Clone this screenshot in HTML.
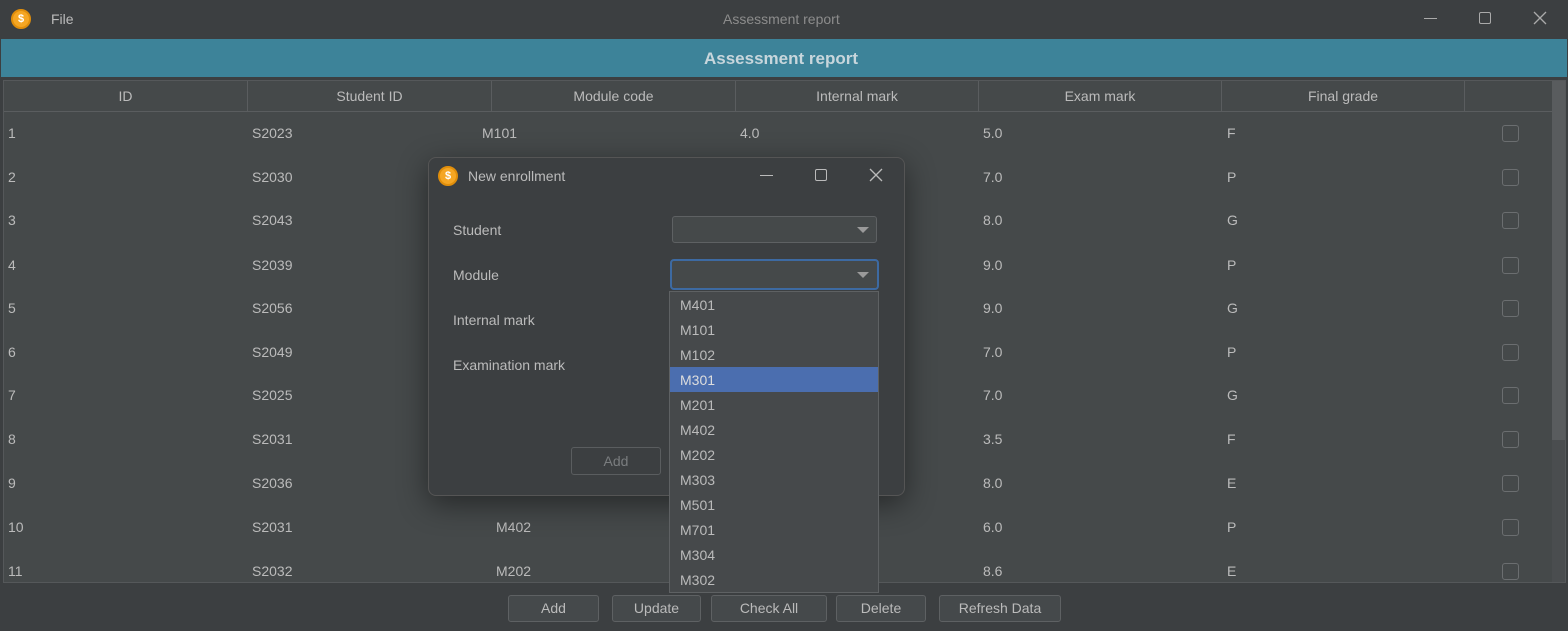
<!DOCTYPE html>
<html><head><style>
*{box-sizing:border-box;margin:0;padding:0}
body{width:1568px;height:631px;background:#3c3f41;font-family:"Liberation Sans",sans-serif;font-size:14px;color:#bbbbbb;position:relative;overflow:hidden}
.a{position:absolute}
.coin{width:20px;height:20px;border-radius:50%;background:#f5a623;border:2px solid #e08e0b;color:#fff;font-size:11px;font-weight:bold;text-align:center;line-height:16px}
.cell{position:absolute;font-size:14px;color:#bbb}
.hd{position:absolute;top:81px;height:30px;line-height:30px;text-align:center;border-right:1px solid #5a5d5f;color:#bbb}
.cb{position:absolute;left:1502px;width:17px;height:17px;border:1px solid #6b6e70;border-radius:3px}
.btn{position:absolute;top:595px;height:27px;border:1px solid #5e6163;border-radius:3px;background:#45494b;text-align:center;line-height:25px;color:#bbb}
.it{position:absolute;left:680px;color:#bbb}
</style></head><body>
<div class="a coin" style="left:11px;top:9px">$</div>
<div class="a" style="left:51px;top:11px">File</div>
<div class="a" style="left:723px;top:11px;color:#8c8c8c">Assessment report</div>
<div class="a" style="left:1424px;top:18px;width:13px;height:1px;background:#aaa"></div>
<div class="a" style="left:1479px;top:12px;width:12px;height:12px;border:1px solid #aaa;border-radius:2px"></div>
<svg class="a" style="left:1533px;top:11px" width="14" height="14"><path d="M1 1L13 13M13 1L1 13" stroke="#aaa" stroke-width="1.3"/></svg>
<div class="a" style="left:1px;top:39px;width:1566px;height:38px;background:#3d8399;text-align:center;line-height:40px;font-weight:bold;font-size:17px;color:#c8d6dc;padding-right:6px">Assessment report</div>
<div class="a" style="left:3px;top:80px;width:1563px;height:503px;background:#45494a;border:1px solid #55585a"></div>
<div class="a" style="left:1552px;top:81px;width:13px;height:501px;background:#4a4d4f"></div>
<div class="a" style="left:1552px;top:81px;width:13px;height:359px;background:#595c5e"></div>
<div class="a" style="left:4px;top:111px;width:1548px;height:1px;background:#5a5d5f"></div>
<div class="hd" style="left:4px;width:244px">ID</div>
<div class="hd" style="left:248px;width:244px">Student ID</div>
<div class="hd" style="left:492px;width:244px">Module code</div>
<div class="hd" style="left:736px;width:243px">Internal mark</div>
<div class="hd" style="left:979px;width:243px">Exam mark</div>
<div class="hd" style="left:1222px;width:243px">Final grade</div>
<div id="rows"></div>
<script>
var d=[["1","S2023","M101","4.0","5.0","F"],["2","S2030","","","7.0","P"],["3","S2043","","","8.0","G"],["4","S2039","","","9.0","P"],["5","S2056","","","9.0","G"],["6","S2049","","","7.0","P"],["7","S2025","","","7.0","G"],["8","S2031","","","3.5","F"],["9","S2036","","","8.0","E"],["10","S2031","M402","","6.0","P"],["11","S2032","M202","","8.6","E"]];
var ys=[133,177,220,265,308,352,395,439,483,527,571],h="";
var xs=[8,252,482,740,983,1227];
d.forEach(function(r,i){r.forEach(function(v,j){if(v){var x=xs[j];if(j==2&&i>8)x=496;h+='<div class="cell" style="left:'+x+'px;top:'+(ys[i]-8)+'px">'+v+'</div>'}});h+='<div class="cb" style="top:'+(ys[i]-8)+'px"></div>'});
document.getElementById('rows').innerHTML=h;
</script>
<div class="btn" style="left:508px;width:91px">Add</div>
<div class="btn" style="left:612px;width:89px">Update</div>
<div class="btn" style="left:711px;width:116px">Check All</div>
<div class="btn" style="left:836px;width:90px">Delete</div>
<div class="btn" style="left:939px;width:122px">Refresh Data</div>

<div class="a" style="left:428px;top:157px;width:477px;height:339px;background:#3c3f41;border:1px solid #555;border-radius:8px;box-shadow:0 8px 30px rgba(0,0,0,.45)"></div>
<div class="a coin" style="left:438px;top:166px">$</div>
<div class="a" style="left:468px;top:168px">New enrollment</div>
<div class="a" style="left:760px;top:175px;width:13px;height:1px;background:#bbb"></div>
<div class="a" style="left:815px;top:169px;width:12px;height:12px;border:1px solid #bbb;border-radius:2px"></div>
<svg class="a" style="left:869px;top:168px" width="14" height="14"><path d="M1 1L13 13M13 1L1 13" stroke="#bbb" stroke-width="1.3"/></svg>
<div class="a" style="left:453px;top:222px">Student</div>
<div class="a" style="left:453px;top:267px">Module</div>
<div class="a" style="left:453px;top:312px">Internal mark</div>
<div class="a" style="left:453px;top:357px">Examination mark</div>
<div class="a" style="left:672px;top:216px;width:205px;height:27px;border:1px solid #5e6163;border-radius:3px;background:#45494a"></div>
<div class="a" style="left:857px;top:227px;width:0;height:0;border-left:6px solid transparent;border-right:6px solid transparent;border-top:6px solid #9a9a9a"></div>
<div class="a" style="left:670px;top:259px;width:209px;height:31px;border:2px solid #3d6aa2;border-radius:4px;background:#45494a"></div>
<div class="a" style="left:857px;top:272px;width:0;height:0;border-left:6px solid transparent;border-right:6px solid transparent;border-top:6px solid #9a9a9a"></div>
<div class="a" style="left:571px;top:447px;width:90px;height:28px;border:1px solid #5a5d5f;border-radius:3px;text-align:center;line-height:26px;color:#7a7d7f">Add</div>
<div class="a" style="left:669px;top:291px;width:210px;height:302px;background:#46494b;border:1px solid #5e6163"></div>
<div class="a" style="left:670px;top:367px;width:208px;height:25px;background:#4b6eaf"></div>
<div class="it" style="top:297px">M401</div><div class="it" style="top:322px">M101</div><div class="it" style="top:347px">M102</div>
<div class="it" style="top:372px;color:#ddd">M301</div><div class="it" style="top:397px">M201</div><div class="it" style="top:422px">M402</div>
<div class="it" style="top:447px">M202</div><div class="it" style="top:472px">M303</div><div class="it" style="top:497px">M501</div>
<div class="it" style="top:522px">M701</div><div class="it" style="top:547px">M304</div><div class="it" style="top:572px">M302</div>
</body></html>
